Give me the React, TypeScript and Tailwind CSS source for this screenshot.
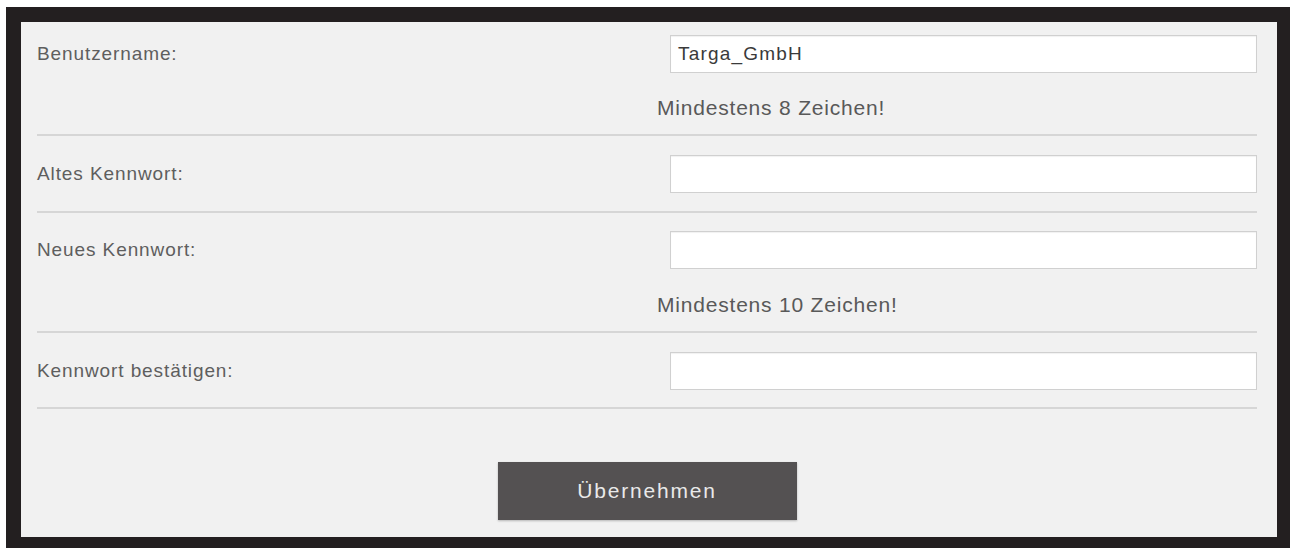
import React from "react";

const font = { fontFamily: '"Liberation Sans", Arial, sans-serif' };

function Line() {
  return <div className="h-[2px] w-full bg-[#d6d6d6]" />;
}

function Field({ label, value }: { label: string; value?: string }) {
  return (
    <div className="flex items-center">
      <div className="w-[633px] shrink-0 text-[19px] text-[#5e5e5e] tracking-[0.9px]">{label}</div>
      <div className="flex-1 h-[38px] bg-white border border-[#d0d0d0] shadow-[inset_0_1px_1px_rgba(0,0,0,0.06)] flex items-center pl-[7px] text-[19px] text-[#3a3a3a] tracking-[1.2px]">
        {value}
      </div>
    </div>
  );
}

function Hint({ text }: { text: string }) {
  return (
    <div className="pl-[620px] text-[21px] leading-[24px] text-[#595959] tracking-[0.8px]">{text}</div>
  );
}

export default function App() {
  return (
    <div className="w-[1290px] h-[548px] bg-white pt-[7px] pl-[6px] overflow-hidden" style={font}>
      <div className="w-[1284px] h-[541px] bg-[#231f20] pt-[15px] pl-[15px] pr-[13px] pb-[11px]">
        <div className="w-full h-full bg-[#f1f1f1] pl-[16px] pr-[20px] flex flex-col">
          <div className="pt-[13px]">
            <Field label="Benutzername:" value="Targa_GmbH" />
          </div>
          <div className="mt-[23px]">
            <Hint text="Mindestens 8 Zeichen!" />
          </div>
          <div className="mt-[14px]">
            <Line />
          </div>
          <div className="pt-[19px] pb-[18px]">
            <Field label="Altes Kennwort:" />
          </div>
          <Line />
          <div className="pt-[18px]">
            <Field label="Neues Kennwort:" />
          </div>
          <div className="mt-[24px]">
            <Hint text="Mindestens 10 Zeichen!" />
          </div>
          <div className="mt-[14px]">
            <Line />
          </div>
          <div className="pt-[19px] pb-[17px]">
            <Field label="Kennwort bestätigen:" />
          </div>
          <Line />
          <div className="mt-[53px] flex justify-center">
            <button className="w-[299px] h-[58px] bg-[#545152] text-[#e9e9e9] text-[21px] tracking-[1.8px] shadow-[0_1px_2px_rgba(0,0,0,0.25)]">
              Übernehmen
            </button>
          </div>
        </div>
      </div>
    </div>
  );
}
